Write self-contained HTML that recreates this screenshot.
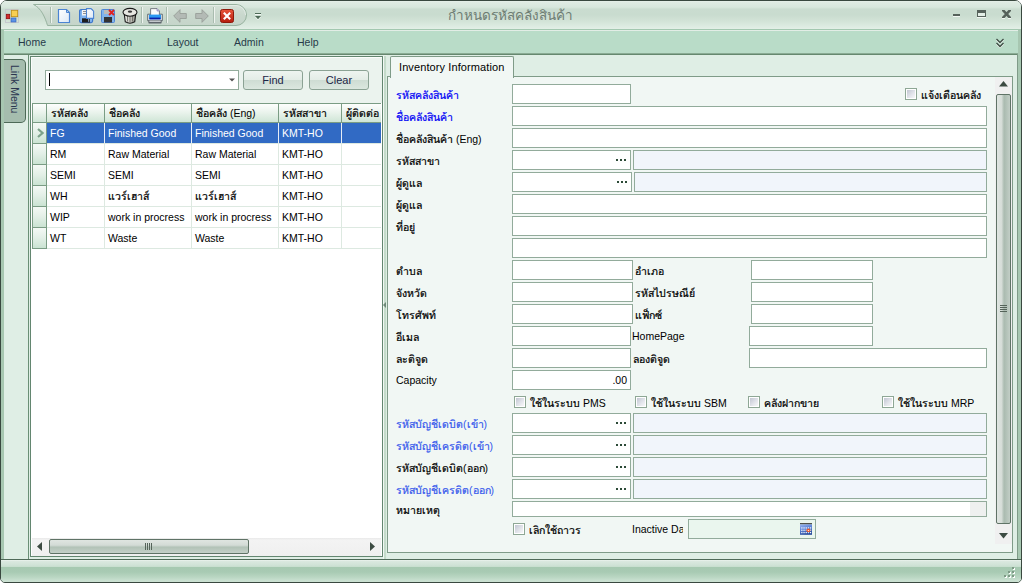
<!DOCTYPE html>
<html><head><meta charset="utf-8">
<style>
*{box-sizing:border-box}
html,body{margin:0;padding:0;width:1022px;height:583px;overflow:hidden;background:#fff}
body{font-family:"Liberation Sans",sans-serif;font-size:10.5px;color:#000;position:relative}
.a{position:absolute}
.t{position:absolute;white-space:nowrap;line-height:13px}
.tb{position:absolute;background:#fff;border:1px solid #92ab9b}
.tbd{position:absolute;background:#f1f5fb;border:1px solid #92ab9b}
.dots{position:absolute;font-size:11px;font-weight:bold;letter-spacing:-1px;line-height:8px}
.cb{position:absolute;width:12px;height:12px;border:1px solid #8ea795;background:#fff}
.cb::after{content:"";position:absolute;left:1px;top:1px;width:8px;height:8px;background:linear-gradient(135deg,#c2c6d2,#e4e6ec 60%,#f7f8f9)}
.lbl{position:absolute;white-space:nowrap;line-height:13px}
.blue{color:#0000f5}
.lblue{color:#3558ec}
.gh{}
.th{font-style:normal;font-size:10.5px;-webkit-text-stroke:0.22px currentColor}
.ttl .th{-webkit-text-stroke:0;font-size:13.5px;letter-spacing:0}
.lb{}
</style></head><body>
<!-- window frame -->
<div class="a" style="left:0;top:0;width:1022px;height:583px;border:1px solid #39483f;border-radius:7px 7px 5px 5px;background:#dfeee5"></div>
<!-- title bar -->
<div class="a" style="left:1px;top:1px;width:1020px;height:28px;border-radius:5px 5px 0 0;background:linear-gradient(#e8f1eb 0,#dfebe3 1px,#d8e7dd 6px,#d3e4d8 7px,#cadcd0 8px,#c9dccf 14px,#d2e3d7 20px,#dcebe1 25px,#e3efe7 28px)"></div>
<div class="a" style="left:1px;top:29px;width:1020px;height:1px;background:#a3c8b0"></div>
<div class="a" style="left:1px;top:30px;width:1020px;height:1px;background:#e2ede6"></div>
<!-- app icon -->
<svg class="a" style="left:5px;top:9px" width="14" height="14" viewBox="0 0 14 14">
<rect x="0.5" y="0.5" width="13" height="13" fill="none" stroke="#c6c9cf"/>
<rect x="6.3" y="1.3" width="6.4" height="6.4" fill="#f7cf52" stroke="#b98a10" stroke-width="0.8"/>
<rect x="1.3" y="5.3" width="3.4" height="4.4" fill="#d42a2a" stroke="#8e1010" stroke-width="0.8"/>
<rect x="6" y="9" width="5" height="4" fill="#5b92e6" stroke="#2e5fb8" stroke-width="0.6"/>
</svg>
<!-- QAT pill -->
<svg class="a" style="left:32px;top:3px" width="220" height="24" viewBox="0 0 220 24">
<defs><linearGradient id="qg" x1="0" y1="0" x2="0" y2="1"><stop offset="0" stop-color="#d6e2d9"/><stop offset="0.5" stop-color="#c9d8cd"/><stop offset="1" stop-color="#c5d5ca"/></linearGradient></defs>
<path d="M1.5 1.5 H204 A10.5 10.5 0 0 1 204 22.5 H15.5 C13 14 9 5 1.5 1.5 Z" fill="url(#qg)" stroke="#98b3a0" stroke-width="1"/>
<path d="M4 2.5 H204 A9.5 9.5 0 0 1 213.5 12" fill="none" stroke="#e3ece6" stroke-width="1"/>
</svg>
<!-- separators -->
<div class="a" style="left:50px;top:7px;width:2px;height:16px;border-left:1px solid #a9bcaf;border-right:1px solid #eef3ef"></div>
<div class="a" style="left:141px;top:7px;width:2px;height:16px;border-left:1px solid #a9bcaf;border-right:1px solid #eef3ef"></div>
<div class="a" style="left:166px;top:7px;width:2px;height:16px;border-left:1px solid #a9bcaf;border-right:1px solid #eef3ef"></div>
<div class="a" style="left:213px;top:7px;width:2px;height:16px;border-left:1px solid #a9bcaf;border-right:1px solid #eef3ef"></div>
<!-- new -->
<svg class="a" style="left:57px;top:8px" width="14" height="16" viewBox="0 0 14 16">
<defs><linearGradient id="pg" x1="0" y1="0" x2="1" y2="1"><stop offset="0" stop-color="#ffffff"/><stop offset="1" stop-color="#dce8f6"/></linearGradient></defs>
<path d="M1.5 1.5 H9.5 L12.5 4.5 V14.5 H1.5 Z" fill="url(#pg)" stroke="#4b84d3" stroke-width="1.2"/>
<path d="M9.5 1.5 V4.5 H12.5" fill="none" stroke="#4b84d3" stroke-width="1"/>
</svg>
<!-- save -->
<svg class="a" style="left:79px;top:8px" width="16" height="16" viewBox="0 0 16 16">
<rect x="0.6" y="1.6" width="13" height="13" rx="1.5" fill="#7fb3ee" stroke="#3f78cc" stroke-width="1.2"/>
<rect x="3" y="2" width="5" height="5.5" fill="#f4f4f4"/>
<path d="M4 3.5 H7.5 M4 5.5 H7.5" stroke="#777" stroke-width="0.8"/>
<rect x="3" y="10.3" width="8" height="4.3" fill="#1e1e1e"/>
<rect x="9.3" y="11" width="0.9" height="2.8" fill="#9ec6f4"/>
<path d="M7.5 0.6 H12 L14.6 3.2 V10.4 H7.5 Z" fill="url(#pg)" stroke="#4b84d3" stroke-width="1.1"/>
</svg>
<!-- save delete -->
<svg class="a" style="left:101px;top:9px" width="14" height="14" viewBox="0 0 14 14">
<rect x="0.5" y="0.5" width="13" height="13" rx="1" fill="#82b4ea" stroke="#4f86d6"/>
<rect x="3" y="1" width="6" height="4" fill="#bbb"/>
<rect x="3" y="8" width="8" height="5.5" fill="#333"/>
<path d="M8 1 L13 6 M13 1 L8 6" stroke="#e02020" stroke-width="1.8"/>
</svg>
<!-- trash -->
<svg class="a" style="left:122px;top:7px" width="16" height="18" viewBox="0 0 16 18">
<defs><linearGradient id="tg" x1="0" y1="0" x2="1" y2="0"><stop offset="0" stop-color="#f2f2ee"/><stop offset="0.5" stop-color="#c9c9c2"/><stop offset="1" stop-color="#8f8f88"/></linearGradient></defs>
<path d="M2.2 6.5 L3.3 14.8 Q8 17.6 12.7 14.8 L13.8 6.5 Z" fill="url(#tg)" stroke="#1a1a1a" stroke-width="1.1"/>
<path d="M5.5 9 V14.5 M8 9.5 V15.5 M10.5 9 V14.5" stroke="#6e6e68" stroke-width="0.9"/>
<ellipse cx="8" cy="5.3" rx="7" ry="3.9" fill="#e7e7e2" stroke="#1a1a1a" stroke-width="1.1"/>
<ellipse cx="8" cy="4.6" rx="2.2" ry="1.2" fill="#3a3a3a"/>
</svg>
<!-- print -->
<svg class="a" style="left:147px;top:8px" width="16" height="16" viewBox="0 0 16 16">
<path d="M0.7 6.2 H15.3 V12.8 H0.7 Z" fill="#e4eaee" stroke="#5a6168" stroke-width="0.9"/>
<path d="M3.6 7.6 V0.6 H10 L12.4 3 V7.6 Z" fill="#fbfbfb" stroke="#6b7178" stroke-width="0.9"/>
<path d="M10 0.6 V3 H12.4" fill="#c9c3e6" stroke="#7a72b0" stroke-width="0.6"/>
<rect x="2" y="6.6" width="12" height="4.6" fill="#2a98f2"/>
<rect x="2.5" y="9.6" width="11" height="1.8" fill="#0a1ea8"/>
<rect x="1.4" y="12" width="13.2" height="3.4" rx="0.6" fill="#5f666c"/>
<rect x="2.3" y="12.6" width="11.4" height="1.1" fill="#eef2f4"/>
</svg>
<!-- back / fwd -->
<svg class="a" style="left:173px;top:9px" width="14" height="14" viewBox="0 0 14 14">
<path d="M7 0.7 L0.7 7 L7 13.3 V9.5 H13.3 V4.5 H7 Z" fill="#b3bab5" stroke="#979e99" stroke-width="0.9" stroke-linejoin="round"/>
</svg>
<svg class="a" style="left:195px;top:9px" width="14" height="14" viewBox="0 0 14 14">
<path d="M7 0.7 L13.3 7 L7 13.3 V9.5 H0.7 V4.5 H7 Z" fill="#b3bab5" stroke="#979e99" stroke-width="0.9" stroke-linejoin="round"/>
</svg>
<!-- close red -->
<svg class="a" style="left:220px;top:9px" width="14" height="14" viewBox="0 0 14 14">
<defs><linearGradient id="rg" x1="0" y1="0" x2="0" y2="1"><stop offset="0" stop-color="#e8553a"/><stop offset="1" stop-color="#b51c0e"/></linearGradient></defs>
<rect x="0.5" y="0.5" width="13" height="13" rx="2" fill="url(#rg)" stroke="#8c1a0c"/>
<path d="M3.8 3.8 L10.2 10.2 M10.2 3.8 L3.8 10.2" stroke="#fff" stroke-width="2.1"/>
</svg>
<!-- dropdown -->
<svg class="a" style="left:255px;top:13px" width="6" height="8" viewBox="0 0 6 8">
<rect x="0" y="1" width="6" height="1" fill="#f4f8f5"/><path d="M0 4 H6 L3 7.3 Z" fill="#f4f8f5"/>
<rect x="0" y="0" width="6" height="1" fill="#4d6a57"/><path d="M0 3 H6 L3 6.3 Z" fill="#4d6a57"/>
</svg>
<!-- title -->
<div class="t ttl" style="left:448px;top:8px;font-size:13px;color:#6e7c73;line-height:16px"><i class="th">กำหนดรหัสคลังสินค้า</i></div>
<!-- window buttons -->
<div class="a" style="left:953px;top:14px;width:7px;height:2px;background:#56625b;box-shadow:0 1px 0 #f2f7f3"></div>
<div class="a" style="left:977px;top:10px;width:9px;height:7px;border:1px solid #56625b;border-top:3px solid #56625b;background:#e4efe7;box-shadow:0 1px 0 #f2f7f3"></div>
<svg class="a" style="left:1002px;top:10px" width="9" height="9" viewBox="0 0 9 9">
<defs><clipPath id="xc"><rect x="0" y="0" width="9" height="8"/></clipPath></defs>
<g clip-path="url(#xc)"><path d="M0.3 -0.5 L8.7 8.5 M8.7 -0.5 L0.3 8.5" stroke="#56625b" stroke-width="2.6"/></g>
<rect x="0" y="8" width="3" height="1" fill="#f2f7f3"/><rect x="6" y="8" width="3" height="1" fill="#f2f7f3"/>
</svg>
<!-- menu bar -->
<div class="a" style="left:1px;top:31px;width:1020px;height:22px;background:#b9dcc8"></div>
<div class="a" style="left:1px;top:53px;width:1020px;height:1px;background:#8aab94"></div>
<div class="a" style="left:1px;top:54px;width:1020px;height:1px;background:#66886f"></div>
<div class="a" style="left:1px;top:29px;width:3px;height:530px;background:#a7c7b1"></div>
<div class="a" style="left:1018px;top:29px;width:3px;height:530px;background:#a7c7b1"></div>
<div class="t" style="left:18px;top:36px;font-size:10.5px;color:#263a48">Home</div>
<div class="t" style="left:79px;top:36px;font-size:10.5px;color:#263a48">MoreAction</div>
<div class="t" style="left:167px;top:36px;font-size:10.5px;color:#263a48">Layout</div>
<div class="t" style="left:234px;top:36px;font-size:10.5px;color:#263a48">Admin</div>
<div class="t" style="left:297px;top:36px;font-size:10.5px;color:#263a48">Help</div>
<svg class="a" style="left:996px;top:38px" width="8" height="11" viewBox="0 0 8 11">
<path d="M0.5 2 L4 5.5 L7.5 2 M0.5 6 L4 9.5 L7.5 6" fill="none" stroke="#f4f8f5" stroke-width="1.2"/>
<path d="M0.5 1 L4 4.5 L7.5 1 M0.5 5 L4 8.5 L7.5 5" fill="none" stroke="#3d4c43" stroke-width="1.3"/>
</svg>

<!-- left link menu tab -->
<div class="a" style="left:4px;top:59px;width:22px;height:64px;border:1px solid #4d6957;border-left:none;border-radius:0 5px 5px 0;background:#a5bdae"></div>
<div class="t" style="left:7px;top:65px;width:14px;font-size:10.5px;color:#2a3550;writing-mode:vertical-rl">Link Menu</div>

<!-- left panel -->
<div class="a" style="left:28px;top:55px;width:1px;height:504px;background:#6a8f76"></div>
<div class="a" style="left:30px;top:56px;width:353px;height:501px;border:1px solid #638670;background:#ebf3ee;box-shadow:inset 1px 1px 0 #fbfdfb"></div>

<!-- search combo -->
<div class="a" style="left:45px;top:70px;width:194px;height:20px;background:#fff;border:1px solid #92ab9b"></div>
<div class="a" style="left:49px;top:73px;width:1px;height:13px;background:#000"></div>
<svg class="a" style="left:229px;top:78px" width="6" height="4" viewBox="0 0 6 4"><path d="M0 0.5 H6 L3 3.5Z" fill="#555"/></svg>
<!-- buttons -->
<div class="a" style="left:243px;top:70px;width:60px;height:20px;border:1px solid #8ba294;border-radius:3px;background:linear-gradient(#eef4f0 0,#e3ece6 50%,#cedcd3 51%,#dbe7df 100%)"></div>
<div class="t" style="left:243px;top:74px;width:60px;text-align:center;font-size:11px;color:#1c2546">Find</div>
<div class="a" style="left:309px;top:70px;width:60px;height:20px;border:1px solid #8ba294;border-radius:3px;background:linear-gradient(#eef4f0 0,#e3ece6 50%,#cedcd3 51%,#dbe7df 100%)"></div>
<div class="t" style="left:309px;top:74px;width:60px;text-align:center;font-size:11px;color:#1c2546">Clear</div>

<!-- grid -->
<div class="a" style="left:31px;top:103px;width:351px;height:453px;background:#fff"></div>
<div class="a" style="left:32px;top:103px;width:349px;height:20px;background:linear-gradient(#fdfefd,#edf5ef 40%,#cfe5d6);border-top:1px solid #7a9c84;border-bottom:1px solid #7a9c84"></div>
<div class="a" style="left:32px;top:103px;width:1px;height:20px;background:#7a9c84"></div>
<div class="a" style="left:46px;top:103px;width:1px;height:20px;background:#7a9c84"></div>
<div class="a" style="left:104px;top:103px;width:1px;height:20px;background:#7a9c84"></div>
<div class="a" style="left:191px;top:103px;width:1px;height:20px;background:#7a9c84"></div>
<div class="a" style="left:278px;top:103px;width:1px;height:20px;background:#7a9c84"></div>
<div class="a" style="left:341px;top:103px;width:1px;height:20px;background:#7a9c84"></div>
<div class="t" style="left:51px;top:107px;width:54px;overflow:hidden"><i class="th">รหัสคลัง</i></div>
<div class="t" style="left:109px;top:107px;width:83px;overflow:hidden"><i class="th">ชื่อคลัง</i></div>
<div class="t" style="left:196px;top:107px;width:83px;overflow:hidden"><i class="th">ชื่อคลัง</i> (Eng)</div>
<div class="t" style="left:283px;top:107px;width:59px;overflow:hidden"><i class="th">รหัสสาขา</i></div>
<div class="t" style="left:346px;top:107px;width:35px;overflow:hidden"><i class="th">ผู้ติดต่อ</i></div>
<div class="a" style="left:32px;top:123px;width:15px;height:21px;border:1px solid #7a9c84;border-top:none;background:linear-gradient(#f4f9f5,#e2efe6 50%,#cae3d2)"></div>
<div class="a" style="left:47px;top:123px;width:334px;height:20px;background:#316ac4"></div>
<div class="a" style="left:47px;top:143px;width:334px;height:1px;background:#dde9e1"></div>
<div class="a" style="left:104px;top:123px;width:1px;height:20px;background:#e6ecf6"></div>
<div class="a" style="left:191px;top:123px;width:1px;height:20px;background:#e6ecf6"></div>
<div class="a" style="left:278px;top:123px;width:1px;height:20px;background:#e6ecf6"></div>
<div class="a" style="left:341px;top:123px;width:1px;height:20px;background:#e6ecf6"></div>
<div class="t" style="left:50px;top:127px;color:#fff">FG</div>
<div class="t" style="left:108px;top:127px;color:#fff">Finished Good</div>
<div class="t" style="left:195px;top:127px;color:#fff">Finished Good</div>
<div class="t" style="left:282px;top:127px;color:#fff">KMT-HO</div>
<div class="a" style="left:32px;top:144px;width:15px;height:21px;border:1px solid #7a9c84;border-top:none;background:linear-gradient(#f4f9f5,#e2efe6 50%,#cae3d2)"></div>
<div class="a" style="left:47px;top:164px;width:334px;height:1px;background:#dde9e1"></div>
<div class="a" style="left:104px;top:144px;width:1px;height:20px;background:#dde9e1"></div>
<div class="a" style="left:191px;top:144px;width:1px;height:20px;background:#dde9e1"></div>
<div class="a" style="left:278px;top:144px;width:1px;height:20px;background:#dde9e1"></div>
<div class="a" style="left:341px;top:144px;width:1px;height:20px;background:#dde9e1"></div>
<div class="t" style="left:50px;top:148px;color:#000">RM</div>
<div class="t" style="left:108px;top:148px;color:#000">Raw Material</div>
<div class="t" style="left:195px;top:148px;color:#000">Raw Material</div>
<div class="t" style="left:282px;top:148px;color:#000">KMT-HO</div>
<div class="a" style="left:32px;top:165px;width:15px;height:21px;border:1px solid #7a9c84;border-top:none;background:linear-gradient(#f4f9f5,#e2efe6 50%,#cae3d2)"></div>
<div class="a" style="left:47px;top:185px;width:334px;height:1px;background:#dde9e1"></div>
<div class="a" style="left:104px;top:165px;width:1px;height:20px;background:#dde9e1"></div>
<div class="a" style="left:191px;top:165px;width:1px;height:20px;background:#dde9e1"></div>
<div class="a" style="left:278px;top:165px;width:1px;height:20px;background:#dde9e1"></div>
<div class="a" style="left:341px;top:165px;width:1px;height:20px;background:#dde9e1"></div>
<div class="t" style="left:50px;top:169px;color:#000">SEMI</div>
<div class="t" style="left:108px;top:169px;color:#000">SEMI</div>
<div class="t" style="left:195px;top:169px;color:#000">SEMI</div>
<div class="t" style="left:282px;top:169px;color:#000">KMT-HO</div>
<div class="a" style="left:32px;top:186px;width:15px;height:21px;border:1px solid #7a9c84;border-top:none;background:linear-gradient(#f4f9f5,#e2efe6 50%,#cae3d2)"></div>
<div class="a" style="left:47px;top:206px;width:334px;height:1px;background:#dde9e1"></div>
<div class="a" style="left:104px;top:186px;width:1px;height:20px;background:#dde9e1"></div>
<div class="a" style="left:191px;top:186px;width:1px;height:20px;background:#dde9e1"></div>
<div class="a" style="left:278px;top:186px;width:1px;height:20px;background:#dde9e1"></div>
<div class="a" style="left:341px;top:186px;width:1px;height:20px;background:#dde9e1"></div>
<div class="t" style="left:50px;top:190px;color:#000">WH</div>
<div class="t" style="left:108px;top:190px;color:#000"><i class="th">แวร์เฮาส์</i></div>
<div class="t" style="left:195px;top:190px;color:#000"><i class="th">แวร์เฮาส์</i></div>
<div class="t" style="left:282px;top:190px;color:#000">KMT-HO</div>
<div class="a" style="left:32px;top:207px;width:15px;height:21px;border:1px solid #7a9c84;border-top:none;background:linear-gradient(#f4f9f5,#e2efe6 50%,#cae3d2)"></div>
<div class="a" style="left:47px;top:227px;width:334px;height:1px;background:#dde9e1"></div>
<div class="a" style="left:104px;top:207px;width:1px;height:20px;background:#dde9e1"></div>
<div class="a" style="left:191px;top:207px;width:1px;height:20px;background:#dde9e1"></div>
<div class="a" style="left:278px;top:207px;width:1px;height:20px;background:#dde9e1"></div>
<div class="a" style="left:341px;top:207px;width:1px;height:20px;background:#dde9e1"></div>
<div class="t" style="left:50px;top:211px;color:#000">WIP</div>
<div class="t" style="left:108px;top:211px;color:#000">work in procress</div>
<div class="t" style="left:195px;top:211px;color:#000">work in procress</div>
<div class="t" style="left:282px;top:211px;color:#000">KMT-HO</div>
<div class="a" style="left:32px;top:228px;width:15px;height:21px;border:1px solid #7a9c84;border-top:none;background:linear-gradient(#f4f9f5,#e2efe6 50%,#cae3d2)"></div>
<div class="a" style="left:47px;top:248px;width:334px;height:1px;background:#dde9e1"></div>
<div class="a" style="left:104px;top:228px;width:1px;height:20px;background:#dde9e1"></div>
<div class="a" style="left:191px;top:228px;width:1px;height:20px;background:#dde9e1"></div>
<div class="a" style="left:278px;top:228px;width:1px;height:20px;background:#dde9e1"></div>
<div class="a" style="left:341px;top:228px;width:1px;height:20px;background:#dde9e1"></div>
<div class="t" style="left:50px;top:232px;color:#000">WT</div>
<div class="t" style="left:108px;top:232px;color:#000">Waste</div>
<div class="t" style="left:195px;top:232px;color:#000">Waste</div>
<div class="t" style="left:282px;top:232px;color:#000">KMT-HO</div>
<svg class="a" style="left:37px;top:128px" width="7" height="10" viewBox="0 0 7 10"><path d="M1 1 L5.5 5 L1 9" fill="none" stroke="#7da38a" stroke-width="2.2"/></svg>
<div class="a" style="left:32px;top:538px;width:349px;height:18px;background:linear-gradient(#e9e9e9,#f3f3f3 2px,#efefef)"></div>
<svg class="a" style="left:37px;top:542px" width="5" height="9" viewBox="0 0 5 9"><path d="M5 0 V9 L0 4.5Z" fill="#3c4b42"/></svg>
<svg class="a" style="left:370px;top:542px" width="5" height="9" viewBox="0 0 5 9"><path d="M0 0 V9 L5 4.5Z" fill="#3c4b42"/></svg>
<div class="a" style="left:49px;top:539px;width:200px;height:15px;border:1px solid #5f7366;border-radius:2px;background:linear-gradient(#dfe5e1,#d3dbd6 40%,#b2c2b7 55%,#c4d0c8)"></div>
<div class="a" style="left:145px;top:543px;width:1px;height:7px;background:#55645a;box-shadow:2px 0 0 #55645a,4px 0 0 #55645a,6px 0 0 #55645a"></div>

<!-- splitter -->
<div class="a" style="left:383px;top:56px;width:4px;height:503px;background:linear-gradient(90deg,#f2f8f4 0,#f2f8f4 1px,#c4dbca 1.5px,#c4dbca 3px,#deede3 3.5px)"></div>
<div class="a" style="left:383px;top:55px;width:4px;height:1px;background:#e6f1ea"></div>
<svg class="a" style="left:383px;top:302px" width="3" height="6" viewBox="0 0 3 6"><path d="M3 0 V6 L0 3Z" fill="#6f8a79"/></svg>

<!-- right panel -->
<div class="a" style="left:387px;top:54px;width:631px;height:505px;border-right:1px solid #7f9b88"></div>
<div class="a" style="left:387px;top:76px;width:626px;height:477px;border:1px solid #7f9b88;background:#f1f7f4"></div>
<!-- tab -->
<div class="a" style="left:390px;top:56px;width:124px;height:22px;border:1px solid #7f9b88;border-bottom:none;border-radius:2px 2px 0 0;background:#f1f7f4"></div>
<div class="t" style="left:399px;top:61px;font-size:11px;letter-spacing:0.1px">Inventory Information</div>

<div class="t lb blue" style="left:396px;top:89px"><i class="th">รหัสคลังสินค้า</i></div>
<div class="t lb blue" style="left:396px;top:111px"><i class="th">ชื่อคลังสินค้า</i></div>
<div class="t lb " style="left:396px;top:133px"><i class="th">ชื่อคลังสินค้า</i> (Eng)</div>
<div class="t lb " style="left:396px;top:155px"><i class="th">รหัสสาขา</i></div>
<div class="t lb " style="left:396px;top:177px"><i class="th">ผู้ดูแล</i></div>
<div class="t lb " style="left:396px;top:199px"><i class="th">ผู้ดูแล</i></div>
<div class="t lb " style="left:396px;top:221px"><i class="th">ที่อยู่</i></div>
<div class="t lb " style="left:396px;top:265px"><i class="th">ตำบล</i></div>
<div class="t lb " style="left:396px;top:287px"><i class="th">จังหวัด</i></div>
<div class="t lb " style="left:396px;top:309px"><i class="th">โทรศัพท์</i></div>
<div class="t lb " style="left:396px;top:331px"><i class="th">อีเมล</i></div>
<div class="t lb " style="left:396px;top:353px"><i class="th">ละติจูด</i></div>
<div class="t lb " style="left:396px;top:374px">Capacity</div>
<div class="a" style="left:512px;top:84px;width:119px;height:20px;background:#fff;border:1px solid #92ab9b"></div>
<div class="cb" style="left:905px;top:88px"></div>
<div class="t lb " style="left:921px;top:89px"><i class="th">แจ้งเตือนคลัง</i></div>
<div class="a" style="left:512px;top:106px;width:475px;height:20px;background:#fff;border:1px solid #92ab9b"></div>
<div class="a" style="left:512px;top:128px;width:475px;height:20px;background:#fff;border:1px solid #92ab9b"></div>
<div class="a" style="left:512px;top:150px;width:119px;height:20px;background:#fff;border:1px solid #92ab9b"></div>
<div class="a" style="left:616px;top:159px;width:2px;height:2px;background:#2c4a37;box-shadow:4px 0 0 #2c4a37,8px 0 0 #2c4a37"></div>
<div class="a" style="left:633px;top:150px;width:354px;height:20px;background:#f1f5fb;border:1px solid #92ab9b"></div>
<div class="a" style="left:512px;top:172px;width:120px;height:20px;background:#fff;border:1px solid #92ab9b"></div>
<div class="a" style="left:617px;top:181px;width:2px;height:2px;background:#2c4a37;box-shadow:4px 0 0 #2c4a37,8px 0 0 #2c4a37"></div>
<div class="a" style="left:634px;top:172px;width:353px;height:20px;background:#f1f5fb;border:1px solid #92ab9b"></div>
<div class="a" style="left:512px;top:194px;width:475px;height:20px;background:#fff;border:1px solid #92ab9b"></div>
<div class="a" style="left:512px;top:216px;width:475px;height:20px;background:#fff;border:1px solid #92ab9b"></div>
<div class="a" style="left:512px;top:238px;width:475px;height:20px;background:#fff;border:1px solid #92ab9b"></div>
<div class="a" style="left:512px;top:260px;width:121px;height:20px;background:#fff;border:1px solid #92ab9b"></div>
<div class="t lb " style="left:635px;top:265px"><i class="th">อำเภอ</i></div>
<div class="a" style="left:751px;top:260px;width:122px;height:20px;background:#fff;border:1px solid #92ab9b"></div>
<div class="a" style="left:512px;top:282px;width:121px;height:20px;background:#fff;border:1px solid #92ab9b"></div>
<div class="t lb " style="left:635px;top:287px"><i class="th">รหัสไปรษณีย์</i></div>
<div class="a" style="left:751px;top:282px;width:122px;height:20px;background:#fff;border:1px solid #92ab9b"></div>
<div class="a" style="left:512px;top:304px;width:121px;height:20px;background:#fff;border:1px solid #92ab9b"></div>
<div class="t lb " style="left:635px;top:309px"><i class="th">แฟ็กซ์</i></div>
<div class="a" style="left:751px;top:304px;width:122px;height:20px;background:#fff;border:1px solid #92ab9b"></div>
<div class="a" style="left:512px;top:326px;width:119px;height:20px;background:#fff;border:1px solid #92ab9b"></div>
<div class="t lb " style="left:632px;top:330px">HomePage</div>
<div class="a" style="left:749px;top:326px;width:124px;height:20px;background:#fff;border:1px solid #92ab9b"></div>
<div class="a" style="left:512px;top:348px;width:119px;height:20px;background:#fff;border:1px solid #92ab9b"></div>
<div class="t lb " style="left:633px;top:353px"><i class="th">ลองติจูด</i></div>
<div class="a" style="left:749px;top:348px;width:238px;height:20px;background:#fff;border:1px solid #92ab9b"></div>
<div class="a" style="left:512px;top:370px;width:119px;height:20px;background:#fff;border:1px solid #92ab9b"></div>
<div class="t" style="left:512px;top:374px;width:115px;text-align:right">.00</div>
<div class="cb" style="left:514px;top:396px"></div>
<div class="t lb " style="left:530px;top:397px"><i class="th">ใช้ในระบบ</i> PMS</div>
<div class="cb" style="left:635px;top:396px"></div>
<div class="t lb " style="left:651px;top:397px"><i class="th">ใช้ในระบบ</i> SBM</div>
<div class="cb" style="left:748px;top:396px"></div>
<div class="t lb " style="left:764px;top:397px"><i class="th">คลังฝากขาย</i></div>
<div class="cb" style="left:882px;top:396px"></div>
<div class="t lb " style="left:898px;top:397px"><i class="th">ใช้ในระบบ</i> MRP</div>
<div class="t lb lblue" style="left:396px;top:418px"><i class="th">รหัสบัญชีเดบิต</i>(<i class="th">เข้า</i>)</div>
<div class="a" style="left:512px;top:413px;width:119px;height:20px;background:#fff;border:1px solid #92ab9b"></div>
<div class="a" style="left:616px;top:422px;width:2px;height:2px;background:#2c4a37;box-shadow:4px 0 0 #2c4a37,8px 0 0 #2c4a37"></div>
<div class="a" style="left:633px;top:413px;width:354px;height:20px;background:#f1f5fb;border:1px solid #92ab9b"></div>
<div class="t lb lblue" style="left:396px;top:440px"><i class="th">รหัสบัญชีเครดิต</i>(<i class="th">เข้า</i>)</div>
<div class="a" style="left:512px;top:435px;width:119px;height:20px;background:#fff;border:1px solid #92ab9b"></div>
<div class="a" style="left:616px;top:444px;width:2px;height:2px;background:#2c4a37;box-shadow:4px 0 0 #2c4a37,8px 0 0 #2c4a37"></div>
<div class="a" style="left:633px;top:435px;width:354px;height:20px;background:#f1f5fb;border:1px solid #92ab9b"></div>
<div class="t lb " style="left:396px;top:462px"><i class="th">รหัสบัญชีเดบิต</i>(<i class="th">ออก</i>)</div>
<div class="a" style="left:512px;top:457px;width:119px;height:20px;background:#fff;border:1px solid #92ab9b"></div>
<div class="a" style="left:616px;top:466px;width:2px;height:2px;background:#2c4a37;box-shadow:4px 0 0 #2c4a37,8px 0 0 #2c4a37"></div>
<div class="a" style="left:633px;top:457px;width:354px;height:20px;background:#f1f5fb;border:1px solid #92ab9b"></div>
<div class="t lb lblue" style="left:396px;top:484px"><i class="th">รหัสบัญชีเครดิต</i>(<i class="th">ออก</i>)</div>
<div class="a" style="left:512px;top:479px;width:119px;height:20px;background:#fff;border:1px solid #92ab9b"></div>
<div class="a" style="left:616px;top:488px;width:2px;height:2px;background:#2c4a37;box-shadow:4px 0 0 #2c4a37,8px 0 0 #2c4a37"></div>
<div class="a" style="left:633px;top:479px;width:354px;height:20px;background:#f1f5fb;border:1px solid #92ab9b"></div>
<div class="t lb " style="left:396px;top:504px"><i class="th">หมายเหตุ</i></div>
<div class="a" style="left:512px;top:501px;width:475px;height:16px;background:#fff;border:1px solid #92ab9b"></div>
<div class="a" style="left:970px;top:502px;width:16px;height:14px;background:#eef0ef"></div>
<div class="cb" style="left:513px;top:523px"></div>
<div class="t lb " style="left:529px;top:524px"><i class="th">เลิกใช้ถาวร</i></div>
<div class="t" style="left:632px;top:523px;width:51px;overflow:hidden">Inactive Date</div>
<div class="a" style="left:688px;top:519px;width:128px;height:20px;background:#eaf6ee;border:1px solid #92ab9b"></div>
<svg class="a" style="left:800px;top:523px" width="12" height="12" viewBox="0 0 12 12">
<defs><linearGradient id="cg" x1="0" y1="0" x2="0.4" y2="1"><stop offset="0" stop-color="#9ab8f2"/><stop offset="0.5" stop-color="#5b82d6"/><stop offset="1" stop-color="#23479a"/></linearGradient></defs>
<rect x="0" y="0.2" width="12" height="1.2" fill="#2a2a22"/>
<rect x="0" y="1.4" width="12" height="10.4" fill="url(#cg)"/>
<rect x="1.2" y="4.3" width="1.3" height="1.3" fill="#f4f8ff"/><rect x="3.4" y="4.3" width="1.3" height="1.3" fill="#f4f8ff"/><rect x="5.6" y="4.3" width="1.3" height="1.3" fill="#f4f8ff"/><rect x="7.8" y="4.3" width="1.3" height="1.3" fill="#f4f8ff"/><rect x="9.9" y="4.3" width="1.3" height="1.3" fill="#f4f8ff"/><rect x="1.2" y="6.6" width="1.3" height="1.3" fill="#f4f8ff"/><rect x="3.4" y="6.6" width="1.3" height="1.3" fill="#f4f8ff"/><rect x="5.6" y="6.6" width="1.3" height="1.3" fill="#f4f8ff"/><rect x="7.8" y="6.6" width="1.3" height="1.3" fill="#f4f8ff"/><rect x="9.9" y="6.6" width="1.3" height="1.3" fill="#f4f8ff"/><rect x="1.2" y="8.9" width="1.3" height="1.3" fill="#f4f8ff"/><rect x="3.4" y="8.9" width="1.3" height="1.3" fill="#f4f8ff"/><rect x="5.6" y="8.9" width="1.3" height="1.3" fill="#f4f8ff"/><rect x="7.8" y="8.9" width="1.3" height="1.3" fill="#f4f8ff"/><rect x="9.9" y="8.9" width="1.3" height="1.3" fill="#f4f8ff"/>
<circle cx="8.4" cy="7.3" r="1.9" fill="#e85a2e"/><rect x="7.8" y="7" width="1.3" height="0.8" fill="#fff"/>
</svg>
<div class="a" style="left:995px;top:77px;width:17px;height:467px;background:#f0f0f0"></div>
<svg class="a" style="left:999px;top:81px" width="9" height="6" viewBox="0 0 9 6"><path d="M0 5.5 H9 L4.5 0Z" fill="#3c4b42"/></svg>
<svg class="a" style="left:999px;top:533px" width="9" height="6" viewBox="0 0 9 6"><path d="M0 0 H9 L4.5 5.5Z" fill="#3c4b42"/></svg>
<div class="a" style="left:996px;top:94px;width:15px;height:430px;border:1px solid #5f7366;border-radius:2px;background:linear-gradient(90deg,#e0e6e2,#d6ddd8 35%,#aabbb0 55%,#c2cec6)"></div>
<div class="a" style="left:1000px;top:305px;width:7px;height:1px;background:#55645a;box-shadow:0 2px 0 #55645a,0 4px 0 #55645a,0 6px 0 #55645a"></div>

<!-- status bar -->
<div class="a" style="left:1px;top:559px;width:1020px;height:1px;background:#4f6a58"></div>
<div class="a" style="left:1px;top:560px;width:1020px;height:22px;border-radius:0 0 4px 4px;background:linear-gradient(#f0f6f2 0,#dbe9e0 1px,#d0e3d7 5px,#c9dfd0 6.5px,#a6c9b1 7px,#a8cab3 12px,#b9d6c2 17px,#cbe1d2 21px)"></div>
<div class="a" style="left:1013px;top:568px;width:2px;height:2px;background:#fff;box-shadow:-4px 4px 0 #fff,0px 4px 0 #fff,-8px 8px 0 #fff,-4px 8px 0 #fff,0px 8px 0 #fff"></div>
<div class="a" style="left:1012px;top:567px;width:2px;height:2px;background:#7e9a86;box-shadow:-4px 4px 0 #7e9a86,0px 4px 0 #7e9a86,-8px 8px 0 #7e9a86,-4px 8px 0 #7e9a86,0px 8px 0 #7e9a86"></div>
</body></html>
